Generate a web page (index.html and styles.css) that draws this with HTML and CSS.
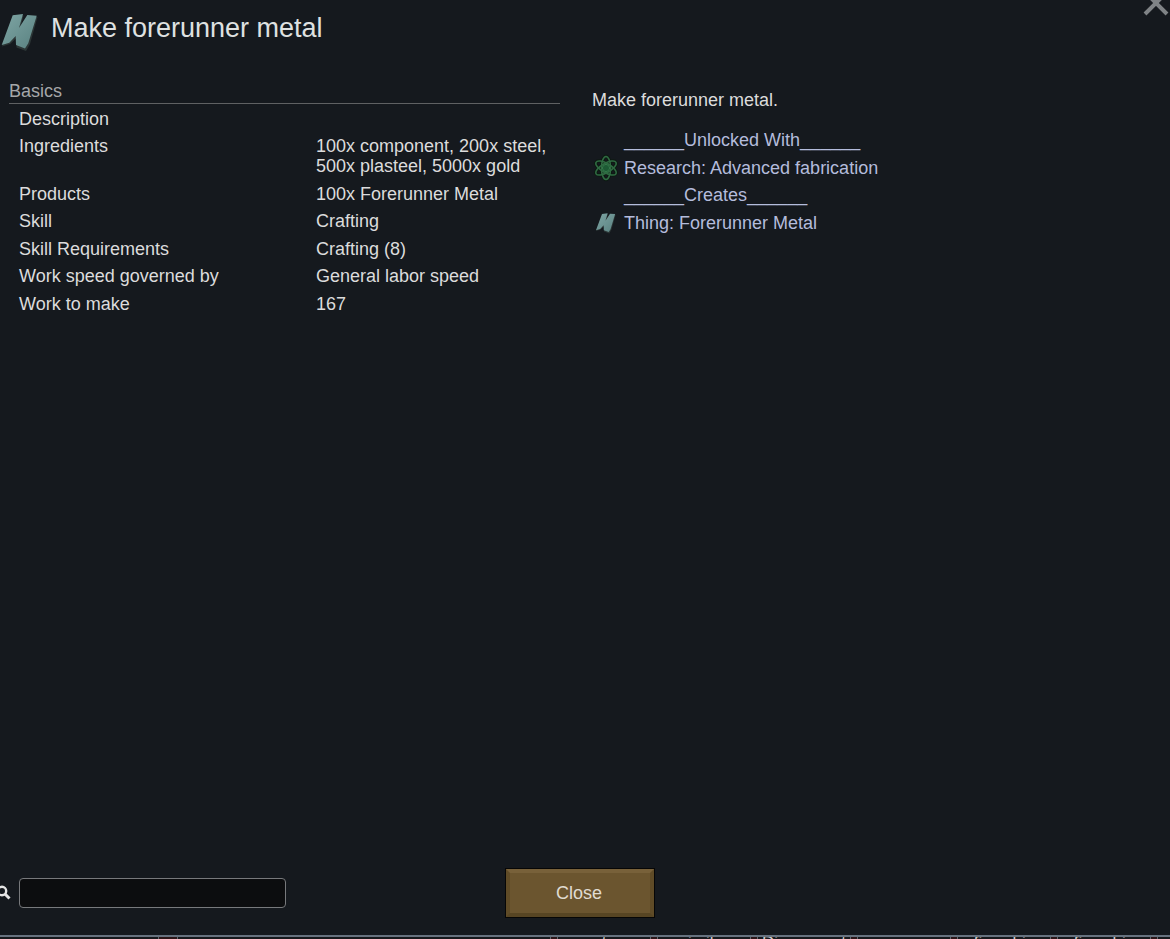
FILE: index.html
```html
<!DOCTYPE html>
<html lang="en">
<head>
  <meta charset="UTF-8">
  <title>Make forerunner metal</title>
  <link rel="stylesheet" href="styles.css">
</head>
<body>
  <div class="dialog">
    <!-- Close cross, cut by the top edge -->
    <svg class="close-x" width="30" height="18" viewBox="0 0 30 18">
      <path d="M5 -8 L27 14 M27 -8 L5 14" stroke="#7f8386" stroke-width="4" fill="none"/>
    </svg>

    <!-- Title -->
    <div class="title-row">
      <svg class="thing-icon big" viewBox="0 0 40 42">
        <use href="#metal"/>
      </svg>
      <h1>Make forerunner metal</h1>
    </div>

    <div class="columns">
      <!-- Stats table -->
      <div class="stats">
        <div class="section">Basics</div>
        <div class="stat"><span>Description</span><span></span></div>
        <div class="stat"><span>Ingredients</span><span class="two-line">100x component, 200x steel, 500x plasteel, 5000x gold</span></div>
        <div class="stat"><span>Products</span><span>100x Forerunner Metal</span></div>
        <div class="stat"><span>Skill</span><span>Crafting</span></div>
        <div class="stat"><span>Skill Requirements</span><span>Crafting (8)</span></div>
        <div class="stat"><span>Work speed governed by</span><span>General labor speed</span></div>
        <div class="stat"><span>Work to make</span><span>167</span></div>
      </div>

      <!-- Description and links -->
      <div class="info">
        <p class="desc">Make forerunner metal.</p>
        <div class="links">
          <div class="link-row"><span class="slot"></span><span>______Unlocked With______</span></div>
          <div class="link-row">
            <span class="slot">
              <svg class="atom" width="26" height="28" viewBox="0 0 26 28">
                <g fill="none" stroke="#0d1a12" stroke-width="3.4">
                  <ellipse cx="13" cy="14" rx="11.5" ry="4.6" transform="rotate(90 13 14)"/>
                  <ellipse cx="13" cy="14" rx="11.5" ry="4.6" transform="rotate(30 13 14)"/>
                  <ellipse cx="13" cy="14" rx="11.5" ry="4.6" transform="rotate(150 13 14)"/>
                </g>
                <g fill="none" stroke="#2f6b42" stroke-width="1.5">
                  <ellipse cx="13" cy="14" rx="11.5" ry="4.6" transform="rotate(90 13 14)"/>
                  <ellipse cx="13" cy="14" rx="11.5" ry="4.6" transform="rotate(30 13 14)"/>
                  <ellipse cx="13" cy="14" rx="11.5" ry="4.6" transform="rotate(150 13 14)"/>
                </g>
                <circle cx="13" cy="14" r="3.6" fill="#1d5a34" stroke="#347c4c"/>
              </svg>
            </span>
            <span>Research: Advanced fabrication</span>
          </div>
          <div class="link-row"><span class="slot"></span><span>______Creates______</span></div>
          <div class="link-row">
            <span class="slot">
              <svg class="thing-icon small" viewBox="0 0 40 42">
                <use href="#metal"/>
              </svg>
            </span>
            <span>Thing: Forerunner Metal</span>
          </div>
        </div>
      </div>
    </div>

    <!-- Search and close button -->
    <div class="bottom">
      <div class="search">
        <svg class="loupe" width="12" height="18" viewBox="0 0 12 18">
          <circle cx="2" cy="7" r="4.2" fill="none" stroke="#e4e4e4" stroke-width="2.4"/>
          <path d="M5 10 L9.5 14.5" stroke="#e4e4e4" stroke-width="3"/>
        </svg>
        <input class="search-box" type="text">
      </div>
      <button class="close-btn">Close</button>
    </div>
  </div>

  <!-- Game UI peeking out under the dialog -->
  <div class="under">
    <span class="under-cell first"></span>
    <span class="sep wide"></span>
    <span class="under-cell second"></span>
    <span class="sep"></span>
    <span class="under-cell">t</span>
    <span class="sep"></span>
    <span class="under-cell">similar</span>
    <span class="sep"></span>
    <span class="under-cell">Disconnect</span>
    <span class="sep"></span>
    <span class="under-cell">power</span>
    <span class="sep"></span>
    <span class="under-cell">firearbic</span>
    <span class="sep"></span>
    <span class="under-cell">firearbic</span>
    <span class="sep"></span>
  </div>

  <svg class="defs" width="0" height="0">
    <defs>
      <linearGradient id="metal-fill" x1="0" y1="0" x2="1" y2="1">
        <stop offset="0" stop-color="#7ea5a4"/>
        <stop offset="1" stop-color="#5a8281"/>
      </linearGradient>
      <g id="metal">
        <path d="M13.5 6.5 L23.5 5.5 L20 19 L28 6 L37.5 7 L30 34 L26 41 L16.5 37.5 L16.5 28 L10 34 L2 36.5 Z" fill="#2c3636"/>
        <path d="M12.7 5.3 L23 4 L19 18 L27.3 5 L36.7 5.7 L28.3 33.3 L25 38.5 L16 35 L15.7 26 L9.3 32.7 L1.7 35 Z" fill="url(#metal-fill)"/>
      </g>
    </defs>
  </svg>
</body>
</html>
```

FILE: styles.css
```css
html, body {
  margin: 0;
  height: 939px;
  overflow: hidden;
}

body {
  font-family: "Liberation Sans", Arial, sans-serif;
  font-size: 18px;
  line-height: 20px;
  color: #dcdcdc;
  background-color: #15191e;
  display: flex;
  flex-direction: column;
}

.dialog {
  position: relative;
  flex: 1;
  display: flex;
  flex-direction: column;
  min-height: 0;
}

.close-x {
  position: absolute;
  top: 0;
  right: 0;
}

/* Title */
.title-row {
  display: flex;
  align-items: center;
  gap: 11px;
  height: 56px;
}

.title-row h1 {
  margin: 0;
  font-size: 27px;
  font-weight: normal;
  line-height: 32px;
  color: #dfe1e1;
}

.thing-icon.big {
  width: 40px;
  height: 42px;
  margin-top: 6px;
}

.thing-icon.small {
  width: 22px;
  height: 23px;
}

/* Columns */
.columns {
  flex: 1;
  display: flex;
  padding: 25px 0 0 9px;
}

.stats {
  width: 551px;
}

.section {
  height: 22px;
  line-height: 20px;
  color: #a5a7a9;
  border-bottom: 1px solid #5f6163;
  margin-bottom: 1.2px;
}

.stat {
  display: grid;
  grid-template-columns: 297px 1fr;
  padding: 3.75px 0 3.75px 10px;
}

.two-line {
  width: 240px;
}

.info {
  padding: 9px 0 0 32px;
}

.desc {
  margin: 0 0 16.5px;
  line-height: 20px;
}

.links {
  color: #b4bcdc;
}

.link-row {
  display: flex;
  align-items: center;
  height: 27.5px;
}

.slot {
  width: 32px;
  height: 27px;
  display: flex;
  align-items: center;
  justify-content: center;
  padding-right: 4px;
  box-sizing: border-box;
}

/* Bottom bar */
.bottom {
  display: flex;
  align-items: center;
  height: 50px;
  margin-bottom: 17px;
}

.search {
  display: flex;
  align-items: center;
  gap: 7px;
  width: 505px;
}

.search-box {
  width: 267px;
  height: 30px;
  box-sizing: border-box;
  padding: 0;
  background-color: #0c0d0f;
  border: 1px solid #77797c;
  border-radius: 4px;
}

.close-btn {
  width: 150px;
  height: 50px;
  padding: 0 2px 0 0;
  font-family: inherit;
  font-size: 18px;
  color: #e0dcd2;
  background-color: #6b552f;
  border: 5px solid;
  border-color: #78613a #5f4b27 #574523 #5f4b27;
  outline: 1px solid #060606;
  outline-offset: -1px;
}

/* Strip under the dialog */
.under {
  height: 2px;
  display: flex;
  overflow: hidden;
  border-top: 2px solid #67727f;
  font-size: 17px;
  line-height: 12px;
  color: #d0d0d0;
  background-color: #16181c;
}

.under-cell {
  width: 92px;
  flex: none;
  text-align: center;
  white-space: nowrap;
}

.under-cell.first {
  width: 158px;
}

.under-cell.second {
  width: 372px;
}

.sep {
  width: 6px;
  flex: none;
  background-color: #2b1517;
  border-left: 1px solid #5f666e;
  border-right: 1px solid #5f666e;
}

.sep.wide {
  width: 18px;
}

.defs {
  position: absolute;
}
```
